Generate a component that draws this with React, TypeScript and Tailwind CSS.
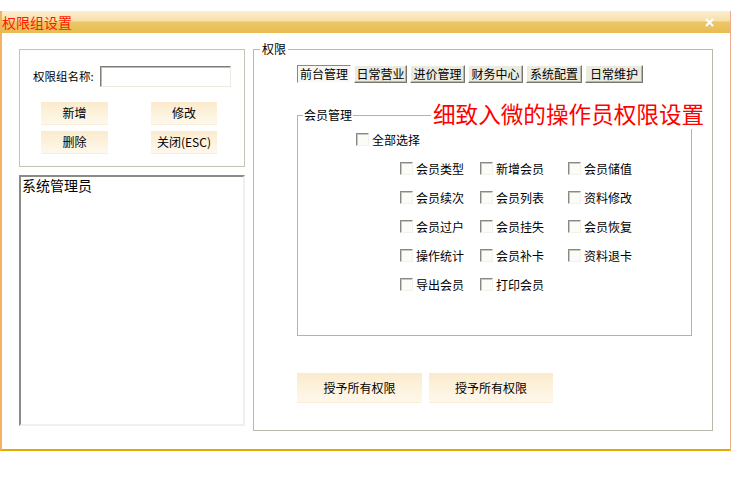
import React from 'react';

const FONT = '"Noto Sans CJK SC", "Noto Sans", sans-serif';

function Check({ label }: { label: string }) {
  return (
    <div className="flex h-[29px] items-center gap-[3px]">
      <span className="box-border h-[13px] w-[13px] border border-t-[#8a8a84] border-l-[#8a8a84] border-r-[#f2f1ea] border-b-[#f2f1ea] bg-[#fbfbf8] shadow-[inset_1px_1px_0_#c9c7bc]" />
      <span className="text-[12px] leading-none text-black">{label}</span>
    </div>
  );
}

function CreamButton({ label, className }: { label: string; className: string }) {
  return (
    <button
      type="button"
      className={`flex items-center justify-center bg-gradient-to-b from-[#fbebcd] to-[#fef8ec] text-[12px] leading-none text-black shadow-[0_1px_0_#fbeed8] ${className}`}
    >
      {label}
    </button>
  );
}

const tabs: { label: string; w: string; active?: boolean }[] = [
  { label: '前台管理', w: 'w-[54px]', active: true },
  { label: '日常营业', w: 'w-[53px]' },
  { label: '进价管理', w: 'w-[55px]' },
  { label: '财务中心', w: 'w-[55px]' },
  { label: '系统配置', w: 'w-[56px]' },
  { label: '日常维护', w: 'w-[58px]' },
];

const perms = [
  '会员类型', '新增会员', '会员储值',
  '会员续次', '会员列表', '资料修改',
  '会员过户', '会员挂失', '会员恢复',
  '操作统计', '会员补卡', '资料退卡',
  '导出会员', '打印会员',
];

export default function App() {
  return (
    <div className="h-[486px] w-[740px] bg-white pt-[11px]" style={{ fontFamily: FONT }}>
      <div className="box-border flex h-[440px] w-[731px] flex-col border-b-2 border-l-2 border-r border-b-[#e6a900] border-l-[#f2b460] border-r-[#efad90]">
        {/* title bar */}
        <div className="flex h-[22px] items-center justify-between bg-[linear-gradient(to_bottom,#fbeecf_0%,#f6dfa9_45%,#edc767_50%,#e7bb50_100%)] pr-[16px]">
          <span className="text-[14px] leading-none text-[#ff1a00]">权限组设置</span>
          <svg width="9" height="9" viewBox="0 0 9 9">
            <path d="M1 1 8 8M8 1 1 8" stroke="#fff" strokeWidth="2" />
          </svg>
        </div>

        <div className="flex pl-[17px] pt-[16px]">
          {/* left column */}
          <div className="flex w-[226px] flex-col">
            <div className="box-border h-[118px] border border-[#c6c3b6] shadow-[inset_1px_1px_0_#fff]">
              <div className="mt-[16px] flex h-[21px] items-center pl-[13px]">
                <span className="w-[67px] shrink-0 whitespace-nowrap text-[11.5px] leading-none text-black">权限组名称:</span>
                <div className="box-border h-[21px] w-[131px] border border-t-[#7f7f7a] border-l-[#7f7f7a] border-r-[#ebe9e0] border-b-[#ebe9e0] bg-white shadow-[inset_1px_1px_0_#bdbbb0]" />
              </div>
              <div className="mt-[15px] flex gap-[43px] pl-[21px]">
                <CreamButton label="新增" className="h-[22px] w-[67px]" />
                <CreamButton label="修改" className="h-[22px] w-[66px]" />
              </div>
              <div className="mt-[7px] flex gap-[43px] pl-[21px]">
                <CreamButton label="删除" className="h-[22px] w-[67px]" />
                <CreamButton label="关闭(ESC)" className="h-[22px] w-[66px]" />
              </div>
            </div>

            <div className="mt-[8px] box-border h-[251px] border-2 border-t-[#8c8a84] border-l-[#8c8a84] border-r-[#f1f0ea] border-b-[#f1f0ea] bg-white px-[1px]">
              <div className="text-[14px] leading-[16px] text-black">系统管理员</div>
            </div>
          </div>

          {/* right group */}
          <div className="relative ml-[8px] box-border h-[382px] w-[460px] border border-[#bab8ac]">
            <span className="absolute left-[6px] top-[-8px] bg-white px-[2px] text-[12px] leading-[14px] text-black">权限</span>

            <div className="ml-[43px] mt-[15px] flex gap-[3px]">
              {tabs.map((t) => (
                <div
                  key={t.label}
                  className={`box-border flex h-[18px] items-center justify-center border text-[12px] leading-none text-black ${t.w} ${
                    t.active
                      ? 'border-t-[#8a8880] border-l-[#8a8880] border-r-[#fff] border-b-[#fff] bg-[#f8f7f2]'
                      : 'border-t-[#fff] border-l-[#fff] border-r-[#77756c] border-b-[#77756c] bg-[#ecebe0] shadow-[inset_-1px_-1px_0_#b9b7ab]'
                  }`}
                >
                  {t.label}
                </div>
              ))}
            </div>

            <div className="relative ml-[43px] mt-[32px] box-border h-[221px] w-[395px] border border-[#b5b3a7]">
              <span className="absolute left-[5px] top-[-8px] bg-white px-[1px] text-[12px] leading-[14px] text-black">会员管理</span>
              <span className="absolute left-[133px] top-[-16px] flex h-[29px] items-center bg-white pl-[2px] pr-[2px] text-[22.6px] leading-none whitespace-nowrap text-[#ff0000]">
                细致入微的操作员权限设置
              </span>

              <div className="pt-[9px]">
                <div className="ml-[58px]">
                  <Check label="全部选择" />
                </div>
                <div className="ml-[102px] grid grid-cols-[80px_88px_88px]">
                  {perms.map((p) => (
                    <Check key={p} label={p} />
                  ))}
                </div>
              </div>
            </div>

            <div className="ml-[43px] mt-[37px] flex gap-[7px]">
              <CreamButton label="授予所有权限" className="h-[29px] w-[125px]" />
              <CreamButton label="授予所有权限" className="h-[29px] w-[124px]" />
            </div>
          </div>
        </div>
      </div>
    </div>
  );
}
